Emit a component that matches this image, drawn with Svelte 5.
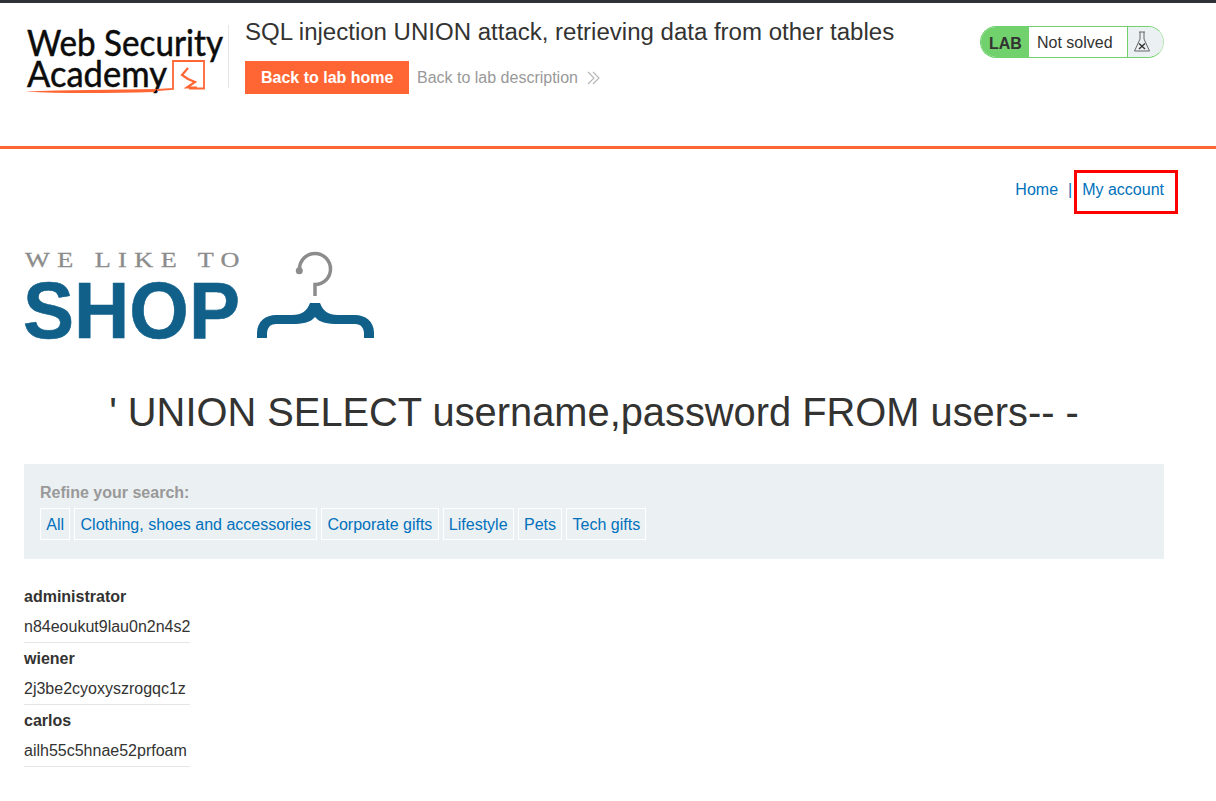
<script>
    const categories = ['All', 'Clothing, shoes and accessories', 'Corporate gifts', 'Lifestyle', 'Pets', 'Tech gifts'];
    const users = [
        { name: 'administrator', password: 'n84eoukut9lau0n2n4s2' },
        { name: 'wiener', password: '2j3be2cyoxyszrogqc1z' },
        { name: 'carlos', password: 'ailh55c5hnae52prfoam' }
    ];
</script>

<div class="topbar"></div>

<header class="lab-header">
    <div class="academy-logo">
        <svg width="204" height="76" viewBox="0 0 204 76">
            <text class="logo-text" x="3" y="30.5" textLength="196" lengthAdjust="spacingAndGlyphs">Web Security</text>
            <text class="logo-text" x="3" y="61.5" textLength="140" lengthAdjust="spacingAndGlyphs">Academy</text>
            <path d="M133 65 L149 64 L149 36 L180 36 L180 63.5 L165 63.5" fill="none" stroke="#ff6633" stroke-width="1.8"/>
            <path d="M1 66.5 C40 65 90 65 133 64 L130 67 C90 68 40 69 1 66.5 Z" fill="#ff6633"/>
            <path d="M164 43 L158 50 L164 54 L171 57 L163 62.5 L173 62.5" fill="none" stroke="#ff6633" stroke-width="2.2"/>
        </svg>
    </div>
    <div class="lab-title">
        <h2>SQL injection UNION attack, retrieving data from other tables</h2>
        <div class="lab-links">
            <a class="back-home" href="#home">Back to lab home</a>
            <a class="back-desc" href="#desc">
                Back to lab description
                <svg width="13" height="14" viewBox="0 0 13 14">
                    <path d="M1 1 L7 7 L1 13 M6 1 L12 7 L6 13" fill="none" stroke="#b4b4b4" stroke-width="1.1"/>
                </svg>
            </a>
        </div>
    </div>
    <div class="lab-status">
        <span class="lab-tag">LAB</span>
        <span class="lab-state">Not solved</span>
        <span class="lab-flask">
            <svg width="18" height="24" viewBox="0 0 18 24">
                <path d="M6 2 H12 M7 2 V9 L1.5 21 H16.5 L11 9 V2" fill="none" stroke="#666" stroke-width="1"/>
                <path d="M6 13.5 L12 19 M12 13.5 L6 19" stroke="#333" stroke-width="1.4"/>
            </svg>
        </span>
    </div>
</header>

<main class="page">
    <nav class="top-links">
        <a href="#home">Home</a>
        <span class="sep">|</span>
        <a href="#account">My account</a>
        <div class="highlight"></div>
    </nav>

    <div class="shop-logo">
        <svg width="352" height="92" viewBox="0 0 352 92">
            <text class="shop-small" x="1" y="16" textLength="222" lengthAdjust="spacingAndGlyphs">WE LIKE TO</text>
            <text class="shop-big" x="-1" y="87" textLength="217" lengthAdjust="spacingAndGlyphs">SHOP</text>
            <path d="M291 45 V33.5 A15.5 15.5 0 1 0 275.5 18" fill="none" stroke="#8c8c8c" stroke-width="3.5"/>
            <circle cx="275.3" cy="19.7" r="3.5" fill="#8c8c8c"/>
            <path d="M233 87 V82 C233 70 242 64 252 64 H268 C278 64 283 60 286 52 H296 C299 60 304 64 314 64 H331 C341 64 350 70 350 82 V87 H340 V83 C340 77 337 73 331 73 H314 C304 73 296 72 291 66 C286 72 278 73 268 73 H252 C246 73 243 77 243 83 V87 Z" fill="#11608a"/>
        </svg>
    </div>

    <h1>' UNION SELECT username,password FROM users-- -</h1>

    <section class="filters">
        <div class="filter-label">Refine your search:</div>
        <div class="filter-list">
            {#each categories as cat}
                <a class="filter" href="#cat">{cat}</a>
            {/each}
        </div>
    </section>

    <table>
        <tbody>
            {#each users as user}
                <tr><th>{user.name}</th></tr>
                <tr><td>{user.password}</td></tr>
            {/each}
        </tbody>
    </table>
</main>

<style>
    :global(body) {
        background: #fff;
        color: #333332;
        font-family: "Liberation Sans", Arial, sans-serif;
        font-size: 16px;
    }

    a {
        text-decoration: none;
        color: #0071bc;
    }

    .topbar {
        height: 3px;
        background: #2f3237;
    }

    .lab-header {
        display: flex;
        height: 146px;
        box-sizing: border-box;
        border-bottom: 3px solid #ff6633;
    }

    .academy-logo {
        width: 204px;
        margin: 22px 0 0 24px;
        height: 63px;
        border-right: 1px solid #e6e6e6;
    }

    .academy-logo svg {
        display: block;
        overflow: visible;
    }

    .logo-text {
        font-family: "Lato", "Liberation Sans", sans-serif;
        font-size: 37px;
        fill: #0c0c0c;
        stroke: #0c0c0c;
        stroke-width: 0.5px;
    }

    .lab-title {
        margin-left: 16px;
        width: 735px;
    }

    h2 {
        margin: 14px 0 0;
        font-size: 24.03px;
        font-weight: 400;
        line-height: 30px;
    }

    .lab-links {
        display: flex;
        align-items: center;
        margin-top: 14px;
    }

    .back-home {
        background: #ff6633;
        color: #fff;
        font-weight: 700;
        height: 33px;
        line-height: 33px;
        padding: 0 16px;
    }

    .back-desc {
        display: flex;
        align-items: center;
        gap: 9px;
        margin-left: 7.5px;
        color: #999;
    }

    .lab-status {
        display: flex;
        height: 30px;
        width: 182px;
        margin-top: 23px;
        border: 1px solid #70d16d;
        border-right-color: #b0e4ae;
        border-radius: 16px;
        overflow: hidden;
    }

    .lab-tag {
        width: 48px;
        background: #70d16d;
        font-weight: 700;
        line-height: 34px;
        padding-left: 8px;
        box-sizing: border-box;
    }

    .lab-state {
        width: 99px;
        line-height: 32px;
        padding-left: 8px;
        box-sizing: border-box;
        border-right: 1px solid #70d16d;
    }

    .lab-flask {
        flex: 1;
        background: #ebf0f2;
        display: flex;
        align-items: center;
        padding-left: 5px;
    }

    .page {
        width: 1140px;
        margin-left: 24px;
    }

    .top-links {
        position: relative;
        display: flex;
        justify-content: flex-end;
        margin-top: 32px;
        line-height: 18px;
    }

    .sep {
        margin: 0 10px;
        color: #0071bc;
    }

    .highlight {
        position: absolute;
        right: -14px;
        top: -11px;
        width: 104px;
        height: 44px;
        box-sizing: border-box;
        border: 3px solid #f00;
    }

    .shop-logo {
        margin-top: 52px;
        height: 92px;
    }

    .shop-logo svg {
        display: block;
    }

    .shop-small {
        font-family: "Liberation Serif", serif;
        font-size: 21px;
        letter-spacing: 6px;
        fill: #8c8c8c;
        stroke: #8c8c8c;
        stroke-width: 0.3px;
    }

    .shop-big {
        font-family: "Liberation Sans", Arial, sans-serif;
        font-size: 80px;
        font-weight: 700;
        fill: #11608a;
        stroke: #11608a;
        stroke-width: 0.6px;
    }

    h1 {
        margin: 45px 0 0;
        font-size: 39.85px;
        font-weight: 400;
        line-height: 48px;
        text-align: center;
    }

    .filters {
        background: #ebf0f2;
        margin-top: 28px;
        padding: 20px 16px 18px;
        height: 95px;
        box-sizing: border-box;
    }

    .filter-label {
        color: #999;
        font-weight: 700;
        line-height: 18px;
    }

    .filter-list {
        display: flex;
        gap: 4px;
        margin-top: 6px;
    }

    .filter {
        background: #ebf0f2;
        border: 1px solid #fff;
        padding: 1px 5.25px 0;
        line-height: 29px;
    }

    table {
        border-collapse: separate;
        border-spacing: 0;
        margin-top: 22px;
    }

    th, td {
        text-align: left;
        padding: 0;
        height: 31px;
        box-sizing: border-box;
        line-height: 18px;
    }

    th {
        font-weight: 700;
    }

    td {
        border-bottom: 1px solid #e6e6e6;
    }
</style>
